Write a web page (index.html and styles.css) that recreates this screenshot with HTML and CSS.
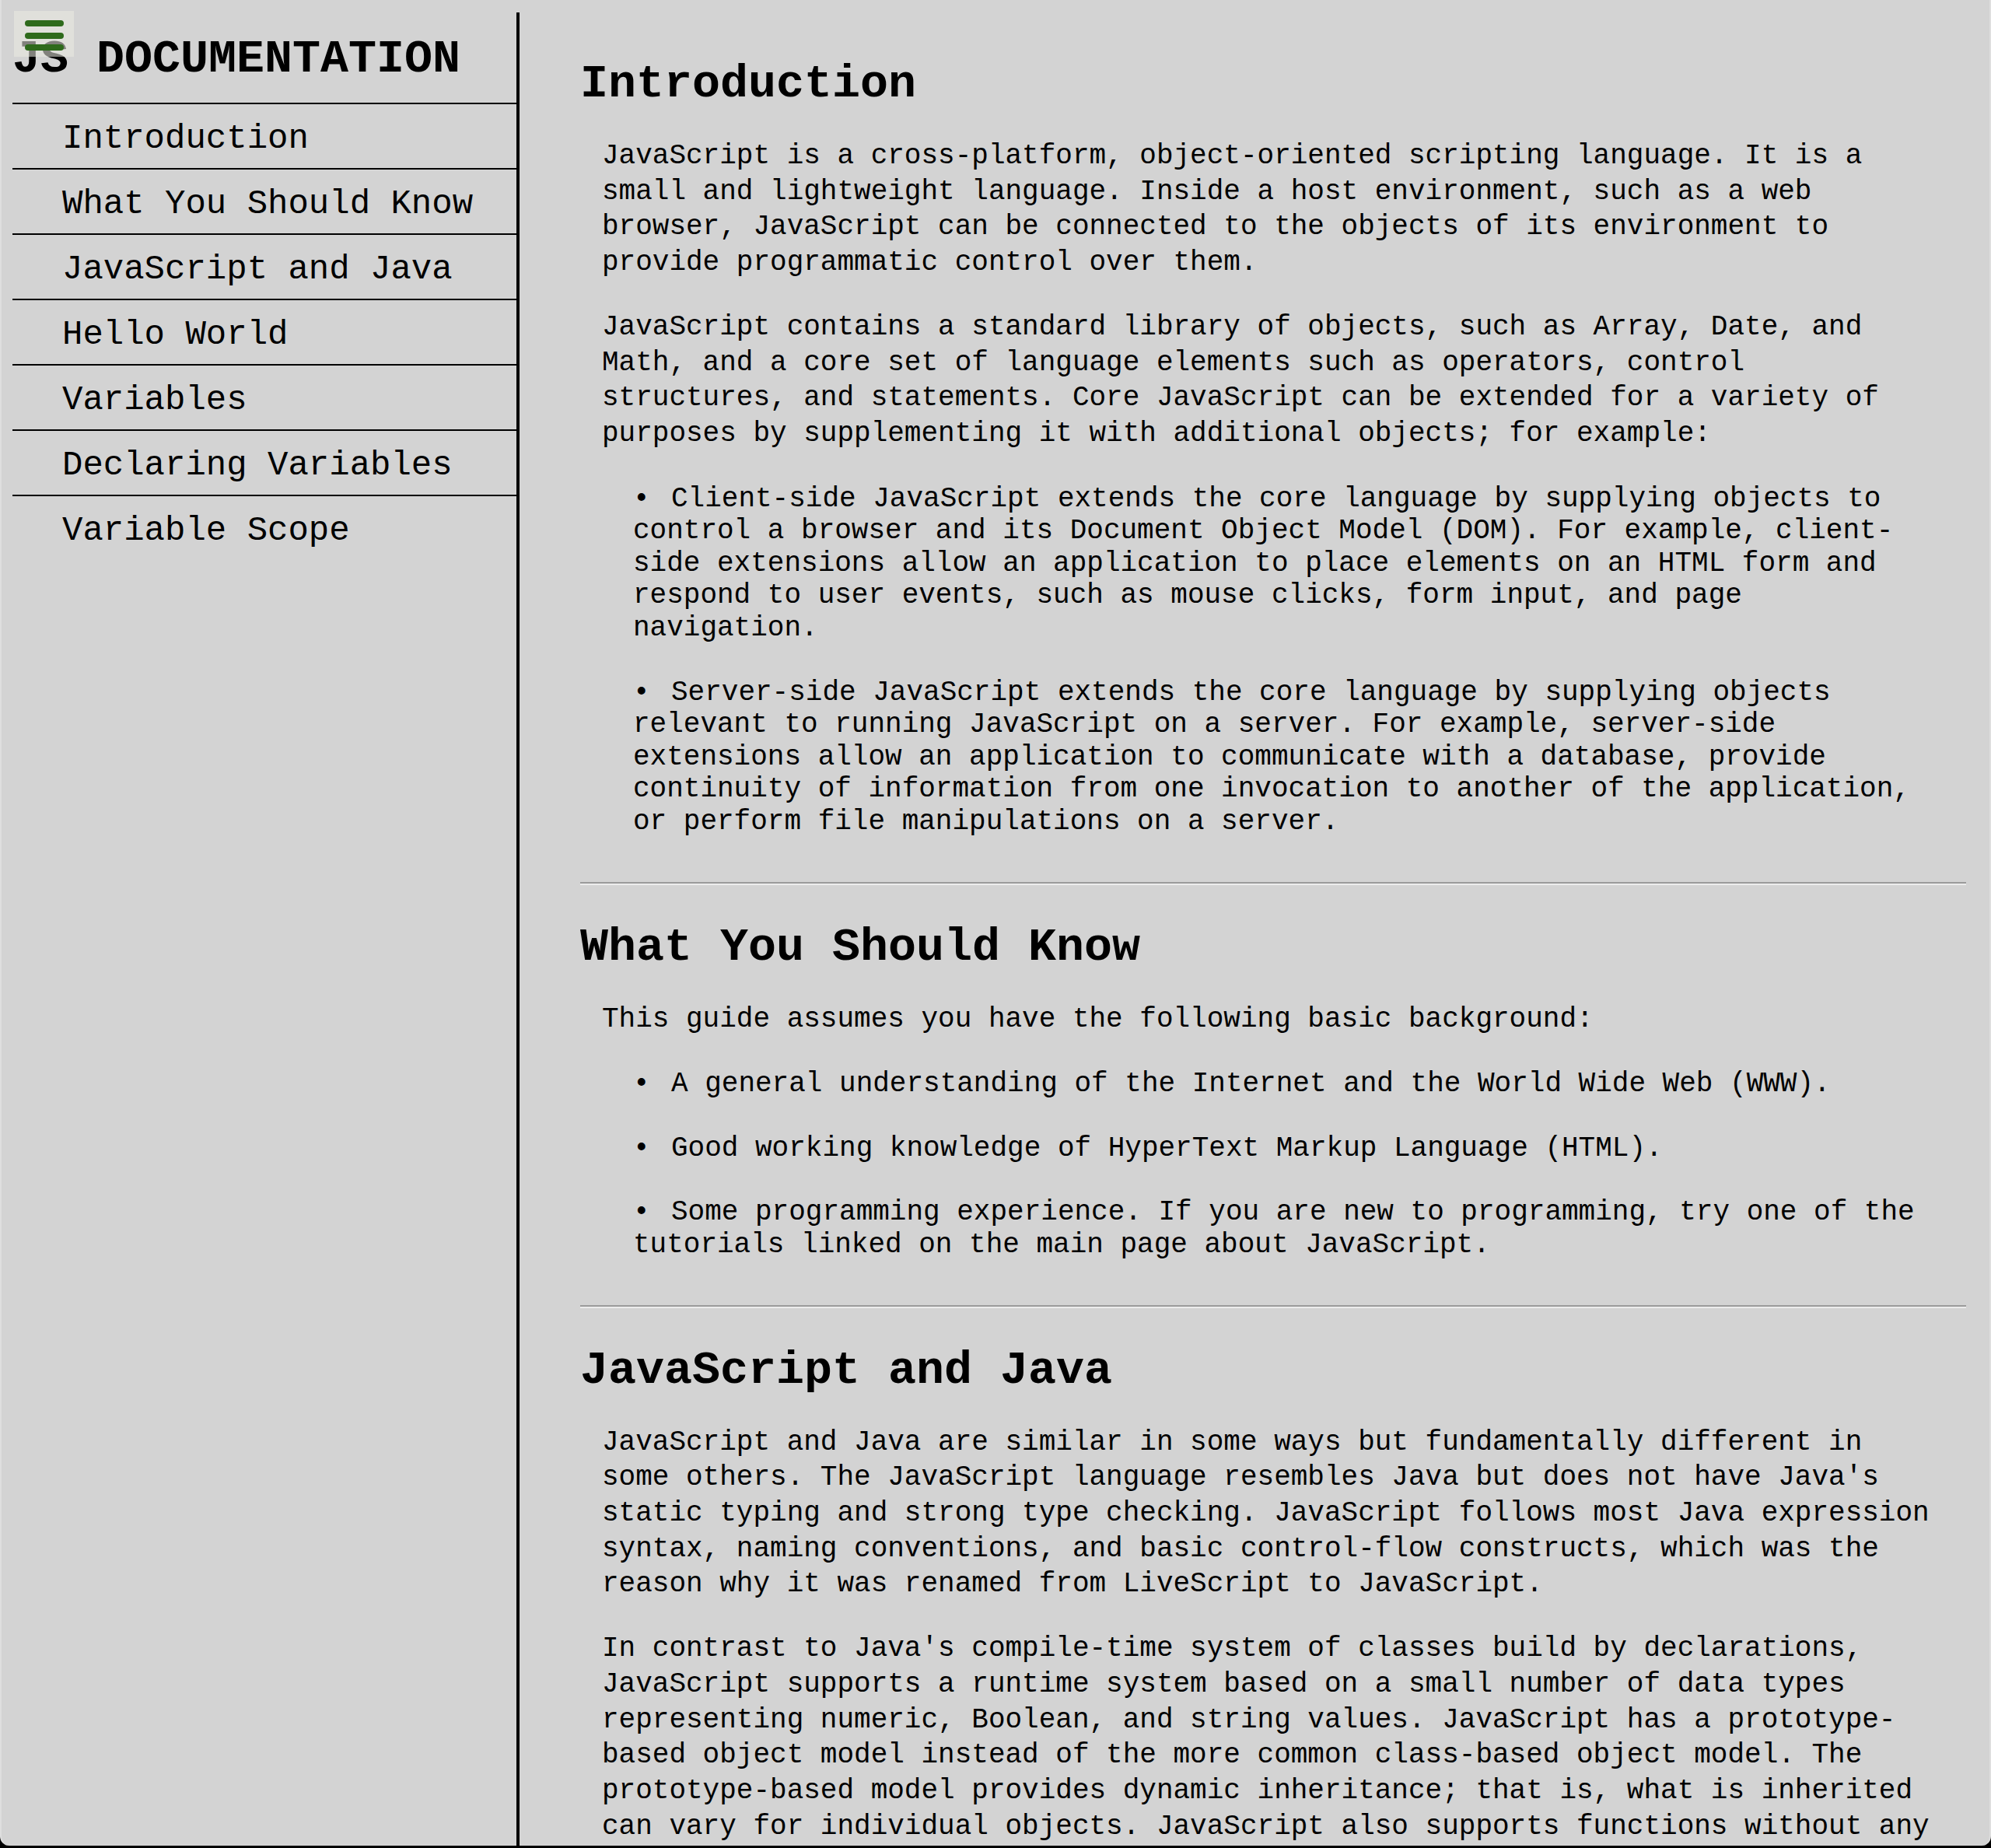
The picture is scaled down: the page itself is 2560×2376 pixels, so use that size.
FILE: index.html
```html
<!DOCTYPE html>
<html lang="en">
<head>
<meta charset="utf-8">
<title>JS Documentation</title>
<link rel="stylesheet" href="styles.css">
</head>
<body>
<div class="window">
  <button class="menu-toggle" aria-label="Menu"><span></span><span></span><span></span></button>
  <nav id="navbar">
    <header class="nav-title">JS DOCUMENTATION</header>
    <ul class="nav-list">
      <li><a class="nav-link" href="#Introduction">Introduction</a></li>
      <li><a class="nav-link" href="#What_You_Should_Know">What You Should Know</a></li>
      <li><a class="nav-link" href="#JavaScript_and_Java">JavaScript and Java</a></li>
      <li><a class="nav-link" href="#Hello_World">Hello World</a></li>
      <li><a class="nav-link" href="#Variables">Variables</a></li>
      <li><a class="nav-link" href="#Declaring_Variables">Declaring Variables</a></li>
      <li><a class="nav-link" href="#Variable_Scope">Variable Scope</a></li>
    </ul>
  </nav>
  <main id="main-doc">
    <section class="main-section" id="Introduction">
      <header class="section-title">Introduction</header>
      <article class="section-body">
        <p>JavaScript is a cross-platform, object-oriented scripting language. It is a small and lightweight language. Inside a host environment, such as a web browser, JavaScript can be connected to the objects of its environment to provide programmatic control over them.</p>
        <p>JavaScript contains a standard library of objects, such as Array, Date, and Math, and a core set of language elements such as operators, control structures, and statements. Core JavaScript can be extended for a variety of purposes by supplementing it with additional objects; for example:</p>
        <ul class="bullets">
          <li>Client-side JavaScript extends the core language by supplying objects to control a browser and its Document Object Model (DOM). For example, client-side extensions allow an application to place elements on an HTML form and respond to user events, such as mouse clicks, form input, and page navigation.</li>
          <li>Server-side JavaScript extends the core language by supplying objects relevant to running JavaScript on a server. For example, server-side extensions allow an application to communicate with a database, provide continuity of information from one invocation to another of the application, or perform file manipulations on a server.</li>
        </ul>
      </article>
    </section>
    <hr class="divider">
    <section class="main-section" id="What_You_Should_Know">
      <header class="section-title">What You Should Know</header>
      <article class="section-body">
        <p>This guide assumes you have the following basic background:</p>
        <ul class="bullets">
          <li>A general understanding of the Internet and the World Wide Web (WWW).</li>
          <li>Good working knowledge of HyperText Markup Language (HTML).</li>
          <li>Some programming experience. If you are new to programming, try one of the tutorials linked on the main page about JavaScript.</li>
        </ul>
      </article>
    </section>
    <hr class="divider">
    <section class="main-section" id="JavaScript_and_Java">
      <header class="section-title">JavaScript and Java</header>
      <article class="section-body">
        <p>JavaScript and Java are similar in some ways but fundamentally different in some others. The JavaScript language resembles Java but does not have Java's static typing and strong type checking. JavaScript follows most Java expression syntax, naming conventions, and basic control-flow constructs, which was the reason why it was renamed from LiveScript to JavaScript.</p>
        <p>In contrast to Java's compile-time system of classes build by declarations, JavaScript supports a runtime system based on a small number of data types representing numeric, Boolean, and string values. JavaScript has a prototype-based object model instead of the more common class-based object model. The prototype-based model provides dynamic inheritance; that is, what is inherited can vary for individual objects. JavaScript also supports functions without any special declarative requirements. Functions can be properties of objects, executing as loosely typed methods.</p>
      </article>
    </section>
    <hr class="divider">
    <section class="main-section" id="Hello_World">
      <header class="section-title">Hello World</header>
      <article class="section-body">
        <p>To get started with writing JavaScript, open the Scratchpad and write your first "Hello world" JavaScript code.</p>
      </article>
    </section>
  </main>
</div>
</body>
</html>
```
FILE: styles.css
```css
html, body {
  margin: 0;
  padding: 0;
  background: #000;
}

.window {
  position: relative;
  box-sizing: border-box;
  height: 2373px;
  display: flex;
  align-items: stretch;
  padding: 16px 14px 0 14px;
  background: #d3d3d3;
  border-left: 2px solid #dedede;
  border-right: 2px solid #dedede;
  border-radius: 0 0 12px 12px;
  overflow: hidden;
  font-family: "Liberation Mono", "Courier New", monospace;
  color: #000;
}

.menu-toggle {
  position: absolute;
  left: 16px;
  top: 14px;
  width: 77px;
  height: 59px;
  padding: 12px 0 0 14px;
  box-sizing: border-box;
  border: none;
  background: rgba(235, 235, 225, 0.55);
  display: flex;
  flex-direction: column;
  gap: 7.5px;
  z-index: 2;
}

.menu-toggle span {
  display: block;
  width: 50px;
  height: 8px;
  border-radius: 4px;
  background: #2e6a1b;
}

#navbar {
  flex: 0 0 652px;
  box-sizing: border-box;
  border-right: 4px solid #000;
}

.nav-title {
  padding: 26px 0 22px;
  font-size: 60px;
  font-weight: bold;
  line-height: 68px;
  white-space: nowrap;
}

.nav-list {
  list-style: none;
  margin: 0;
  padding: 0;
}

.nav-list li {
  border-top: 2px solid #000;
}

.nav-link {
  display: block;
  padding: 19px 0 13px 64px;
  font-size: 44px;
  line-height: 50px;
  color: #000;
  text-decoration: none;
  white-space: nowrap;
}

#main-doc {
  flex: 1;
  min-width: 0;
  padding: 58px 16px 0 78px;
  overflow: hidden;
}

.section-title {
  margin: 0;
  font-size: 60px;
  font-weight: bold;
  line-height: 68px;
}

.section-body {
  font-size: 36px;
}

.section-body p {
  margin: 37px 28px 0;
  line-height: 45.7px;
}

.section-body p:first-child {
  margin-top: 36px;
}

.bullets {
  list-style: none;
  margin: 40px 40px 0 68px;
  padding: 0;
}

.bullets li {
  line-height: 41.6px;
}

.bullets li + li {
  margin-top: 41px;
}

.bullets li::before {
  content: "\2022";
  display: inline-block;
  width: 49px;
}

.divider {
  height: 0;
  margin: 56px 0 46px;
  border: none;
  border-top: 2px solid #9b9b9b;
  border-bottom: 2px solid #ececec;
}
```
